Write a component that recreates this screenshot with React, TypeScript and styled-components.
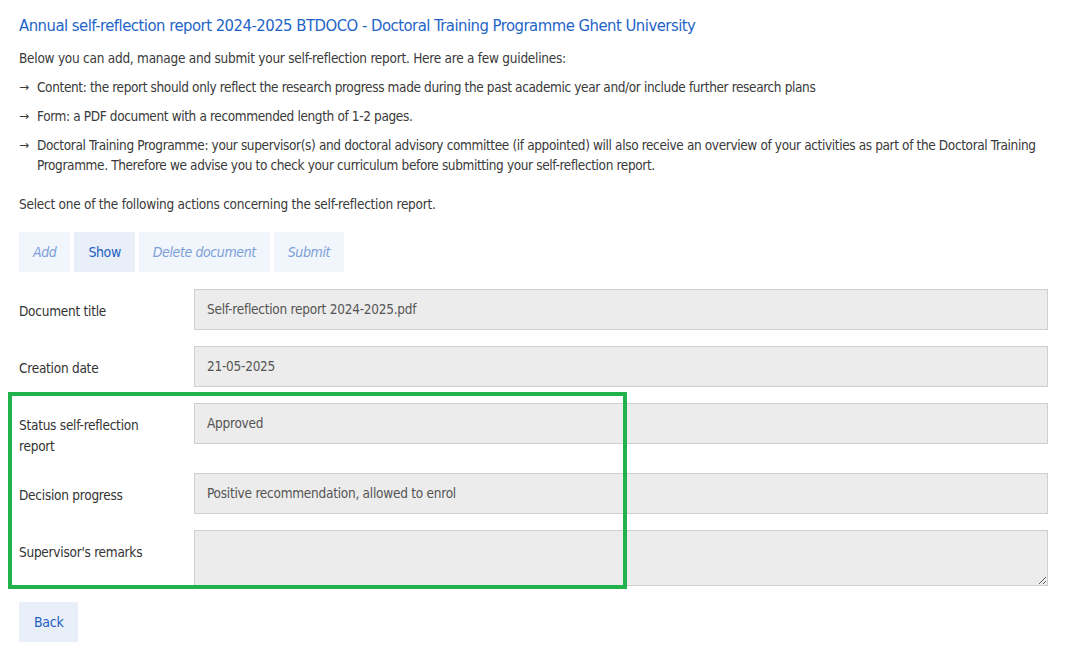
import React from 'react'
import styled, { createGlobalStyle } from 'styled-components'

const GlobalStyle = createGlobalStyle`
    body {
        margin: 0;
        background: #ffffff;
        font-family: "DejaVu Sans Condensed", "Liberation Sans Narrow", "Liberation Sans", sans-serif;
        letter-spacing: -0.25px;
        color: #3a3a3a;
    }
`

const Page = styled.div`
    position: relative;
    padding: 14px 44px 20px 19px;
    width: 1092px;
    box-sizing: border-box;
`
const Title = styled.h1`
    margin: 0 0 10px 0;
    font-size: 16.5px;
    letter-spacing: -0.5px;
    font-weight: normal;
    color: #1e64c8;
    line-height: 24px;
`
const Para = styled.p`
    margin: 0 0 9px 0;
    font-size: 13.5px;
    line-height: 20px;
`
const GuideList = styled.ul`
    list-style: none;
    margin: 0 0 19px 0;
    padding: 0;
`
const GuideItem = styled.li`
    position: relative;
    padding-left: 18px;
    margin-bottom: 9px;
    font-size: 13.5px;
    letter-spacing: -0.37px;
    line-height: 20px;
    &::before {
        content: '→';
        position: absolute;
        left: 0;
        top: 0;
        font-family: "DejaVu Sans", sans-serif;
        font-size: 12px;
    }
`
const ActionBar = styled.div`
    display: flex;
    gap: 4px;
    margin: 18px 0 17px 0;
`
const ActionButton = styled.button<{ $active?: boolean }>`
    height: 40px;
    padding: 0 14px;
    border: none;
    background: ${p => (p.$active ? '#e8eff9' : '#f1f5fc')};
    color: ${p => (p.$active ? '#1e5fc0' : '#7b9fd8')};
    font-family: inherit;
    letter-spacing: -0.4px;
    font-size: 14px;
    font-style: ${p => (p.$active ? 'normal' : 'italic')};
    cursor: pointer;
`
const FormRow = styled.div`
    display: grid;
    grid-template-columns: 175px 1fr;
    align-items: start;
    margin-bottom: 16px;
`
const Label = styled.label`
    max-width: 140px;
    font-size: 13.5px;
    line-height: 21px;
    padding-top: 12px;
    color: #333;
`
const Field = styled.div`
    height: 41px;
    box-sizing: border-box;
    background: #ececec;
    border: 1px solid #cfcfcf;
    padding: 10px 12px;
    font-size: 13.5px;
    line-height: 19px;
    color: #555;
`
const Remarks = styled.textarea`
    height: 56px;
    box-sizing: border-box;
    background: #ececec;
    border: 1px solid #cfcfcf;
    padding: 10px 12px;
    font-family: inherit;
    font-size: 13.5px;
    color: #555;
    resize: vertical;
    display: block;
    width: 100%;
`
const Highlight = styled.div`
    position: absolute;
    left: 8px;
    top: 392px;
    width: 619px;
    height: 197px;
    box-sizing: border-box;
    border: 4px solid #22b24c;
    pointer-events: none;
`
const BackButton = styled.button`
    height: 40px;
    padding: 0 15px;
    border: none;
    background: #e8eff9;
    color: #1e5fc0;
    font-family: inherit;
    letter-spacing: -0.3px;
    font-size: 14px;
    cursor: pointer;
`

const rows = [
    { label: 'Document title', value: 'Self-reflection report 2024-2025.pdf' },
    { label: 'Creation date', value: '21-05-2025' },
    { label: 'Status self-reflection report', value: 'Approved' },
    { label: 'Decision progress', value: 'Positive recommendation, allowed to enrol' },
]

export default function App() {
    return (
        <Page>
            <GlobalStyle />
            <Title>Annual self-reflection report 2024-2025 BTDOCO - Doctoral Training Programme Ghent University</Title>
            <Para>Below you can add, manage and submit your self-reflection report. Here are a few guidelines:</Para>
            <GuideList>
                <GuideItem>Content: the report should only reflect the research progress made during the past academic year and/or include further research plans</GuideItem>
                <GuideItem>Form: a PDF document with a recommended length of 1-2 pages.</GuideItem>
                <GuideItem>Doctoral Training Programme: your supervisor(s) and doctoral advisory committee (if appointed) will also receive an overview of your activities as part of the Doctoral Training Programme. Therefore we advise you to check your curriculum before submitting your self-reflection report.</GuideItem>
            </GuideList>
            <Para>Select one of the following actions concerning the self-reflection report.</Para>
            <ActionBar>
                <ActionButton>Add</ActionButton>
                <ActionButton $active>Show</ActionButton>
                <ActionButton>Delete document</ActionButton>
                <ActionButton>Submit</ActionButton>
            </ActionBar>
            {rows.map(r => (
                <FormRow key={r.label}>
                    <Label>{r.label}</Label>
                    <Field>{r.value}</Field>
                </FormRow>
            ))}
            <FormRow>
                <Label>Supervisor's remarks</Label>
                <Remarks readOnly />
            </FormRow>
            <BackButton>Back</BackButton>
            <Highlight />
        </Page>
    )
}
